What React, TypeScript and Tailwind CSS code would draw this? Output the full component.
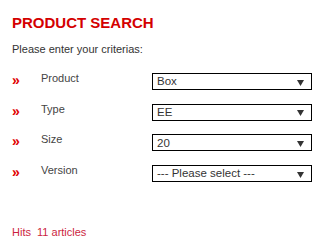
import React from 'react';

const rows = [
  { label: 'Product', value: 'Box' },
  { label: 'Type', value: 'EE' },
  { label: 'Size', value: '20' },
  { label: 'Version', value: '--- Please select ---' },
];

const FakeSelect: React.FC<{ value: string }> = ({ value }) => (
  <div className="mt-[3px] flex h-[17px] w-[160px] items-center justify-between border border-black bg-white pl-[4px] pr-[7px] text-[11.5px] leading-none text-[#333]">
    <span className="pt-[1px]">{value}</span>
    <svg width="7" height="7" viewBox="0 0 7 7" className="mt-[1px]">
      <polygon points="0,1 7,1 3.5,7" fill="#333" />
    </svg>
  </div>
);

export default function App() {
  return (
    <div className="h-[248px] w-[324px] bg-white pl-[12px] pt-[14px] font-['Liberation_Sans',Arial,sans-serif]">
      <h1 className="text-[15px] font-bold leading-[18px] text-[#d40000]">PRODUCT SEARCH</h1>
      <p className="mt-[10px] text-[11px] leading-[14px] text-[#333]">Please enter your criterias:</p>

      <div className="mt-[14px] flex flex-col">
        {rows.map((r) => (
          <div key={r.label} className="flex h-[30.7px] items-start">
            <span className="mt-[3px] w-[29px] text-[14px] font-bold leading-[14px] text-[#e00000]">»</span>
            <span className="mt-[1px] w-[111px] text-[11px] leading-[14px] text-[#444]">{r.label}</span>
            <FakeSelect value={r.value} />
          </div>
        ))}
      </div>

      <p className="mt-[32px] whitespace-pre text-[11px] leading-[14px] text-[#cc1f3f]">Hits  11 articles</p>
    </div>
  );
}
